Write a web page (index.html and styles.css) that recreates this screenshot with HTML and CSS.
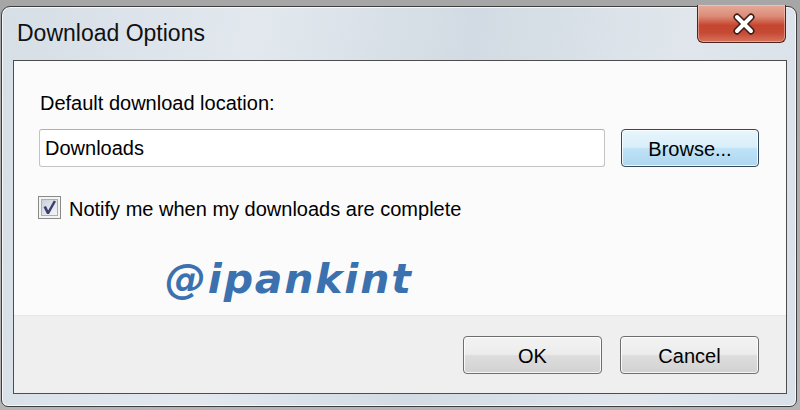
FILE: index.html
```html
<!DOCTYPE html>
<html lang="en">
<head>
<meta charset="utf-8">
<title>Download Options</title>
<link rel="stylesheet" href="styles.css">
</head>
<body>
<div class="window">
  <div class="titlebar">
    <span class="title">Download Options</span>
    <button class="close" aria-label="Close">
      <svg width="22" height="22" viewBox="0 0 22 22">
        <path d="M4 4 L18 18 M18 4 L4 18" stroke="#3a1c16" stroke-width="7" stroke-linecap="round"/>
        <path d="M4 4 L18 18 M18 4 L4 18" stroke="#ffffff" stroke-width="4" stroke-linecap="round"/>
      </svg>
    </button>
  </div>
  <div class="client">
    <div class="content">
      <div class="label">Default download location:</div>
      <div class="field-row">
        <div class="field">Downloads</div>
        <button class="btn browse">Browse...</button>
      </div>
      <div class="check-row">
        <span class="checkbox">
          <svg width="23" height="23" viewBox="0 0 23 23">
            <defs>
              <linearGradient id="cbg" x1="0" y1="0" x2="1" y2="1">
                <stop offset="0" stop-color="#c9ced8"/>
                <stop offset="1" stop-color="#f6f7f9"/>
              </linearGradient>
            </defs>
            <rect x="0.5" y="0.5" width="22" height="22" fill="#f4f4f4" stroke="#8a8a8a"/>
            <rect x="3.5" y="3.5" width="16" height="16" fill="url(#cbg)" stroke="#a9afb9"/>
            <path d="M5.5 11 L8 10 L10.2 14.5 L15.8 4.5 L18 5.5 L11 18 L9 18 Z" fill="#3b3f6e"/>
          </svg>
        </span>
        <span class="check-label">Notify me when my downloads are complete</span>
      </div>
      <div class="watermark">@ipankint</div>
    </div>
    <div class="footer">
      <button class="btn">OK</button>
      <button class="btn">Cancel</button>
    </div>
  </div>
</div>
</body>
</html>
```

FILE: styles.css
```css
html, body {
  margin: 0;
  padding: 0;
}

body {
  width: 800px;
  height: 410px;
  overflow: hidden;
  background: linear-gradient(to bottom, #a6a6a6 0, #b4b4b4 100%);
  font-family: "Liberation Sans", Arial, sans-serif;
  color: #000;
}

.window {
  box-sizing: border-box;
  margin: 6px 0 0 1px;
  width: 796px;
  height: 401px;
  border: 1px solid #3e3e3e;
  border-radius: 9px 9px 7px 7px;
  background: linear-gradient(100deg, #d6dee6 0%, #e2e8ee 30%, #d2dbe3 55%, #e0e6ec 80%, #d9e0e8 100%);
  box-shadow: inset 0 0 0 1px rgba(255, 255, 255, 0.75);
  padding: 0 9px 12px 11px;
  display: flex;
  flex-direction: column;
}

.titlebar {
  height: 53px;
  display: flex;
  justify-content: space-between;
  align-items: flex-start;
}

.title {
  font-size: 23px;
  line-height: 28px;
  padding: 12px 0 0 4px;
  color: #111;
}

.close {
  width: 89px;
  height: 38px;
  margin: -2px 1px 0 0;
  padding: 0;
  border: 1px solid #4a2620;
  border-top: none;
  border-radius: 0 0 6px 6px;
  background: linear-gradient(to bottom, #e6aa9a 0%, #dc8c78 30%, #c6452f 55%, #c54a34 75%, #d7735c 100%);
  box-shadow: inset 0 0 0 1px rgba(255, 220, 210, 0.45);
  display: flex;
  align-items: center;
  justify-content: center;
}

.close svg {
  margin: 0 0 0 4px;
}

.client {
  flex: 1;
  border: 1px solid #4d4d4d;
  background: #fafafa;
  display: flex;
  flex-direction: column;
}

.content {
  flex: 1;
  padding: 30px 27px 0 25px;
  background: #fbfbfb;
}

.label {
  font-size: 20px;
  line-height: 24px;
  padding-left: 1px;
}

.field-row {
  margin-top: 14px;
  display: flex;
  gap: 16px;
}

.field {
  flex: 1;
  height: 38px;
  box-sizing: border-box;
  border: 1px solid #c3c3c3;
  border-top-color: #b0b0b0;
  border-radius: 3px;
  background: #fff;
  font-size: 20px;
  line-height: 24px;
  padding: 6px 0 0 5px;
}

.btn {
  width: 139px;
  height: 38px;
  box-sizing: border-box;
  padding: 1px 0 0;
  font-family: "Liberation Sans", Arial, sans-serif;
  font-size: 20px;
  line-height: 24px;
  color: #000;
  border: 1px solid #6e6e6e;
  border-radius: 4px;
  background: linear-gradient(to bottom, #f3f3f3 0%, #ececec 48%, #dddddd 52%, #d2d2d2 100%);
  box-shadow: inset 0 0 0 1px rgba(255, 255, 255, 0.8);
}

.browse {
  width: 138px;
  border-color: #34495c;
  background: linear-gradient(to bottom, #e9f5fc 0%, #d8eefa 48%, #bfe2f6 52%, #aed7ef 100%);
}

.check-row {
  margin-top: 29px;
  display: flex;
  align-items: flex-start;
  gap: 8px;
}

.checkbox {
  display: block;
  width: 23px;
  height: 23px;
  margin-left: -1px;
}

.checkbox svg {
  display: block;
}

.check-label {
  font-size: 20px;
  line-height: 24px;
  margin-top: 1px;
}

.watermark {
  margin: 34px 0 0 126px;
  font-family: "DejaVu Sans", Verdana, sans-serif;
  font-weight: bold;
  font-style: italic;
  font-size: 41px;
  letter-spacing: 1.8px;
  line-height: 48px;
  color: #3a71ae;
}

.footer {
  height: 78px;
  box-sizing: border-box;
  border-top: 1px solid #e6e6e6;
  background: #efefef;
  padding: 20px 27px 0 0;
  display: flex;
  justify-content: flex-end;
  gap: 18px;
}
```
